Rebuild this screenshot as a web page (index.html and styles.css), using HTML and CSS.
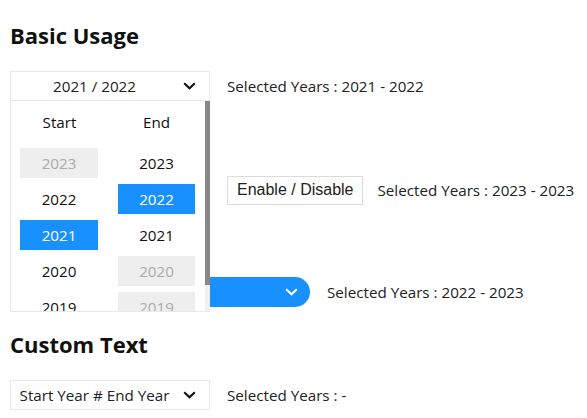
FILE: index.html
```html
<!DOCTYPE html>
<html>
<head>
<meta charset="utf-8">
<link rel="stylesheet" href="styles.css">
</head>
<body>
<h2 class="title title-first">Basic Usage</h2>

<div class="row row-1">
  <div class="picker">
    <div class="picker-head">
      <span class="picker-label">2021 / 2022</span>
      <svg class="chev" viewBox="0 0 13 8" width="13" height="8"><polyline points="1.2,1.2 6.5,6.3 11.8,1.2"/></svg>
    </div>
    <div class="picker-panel">
      <div class="cols">
        <div class="col">
          <div class="col-head">Start</div>
          <div class="cell disabled">2023</div>
          <div class="cell">2022</div>
          <div class="cell selected">2021</div>
          <div class="cell">2020</div>
          <div class="cell">2019</div>
        </div>
        <div class="col">
          <div class="col-head">End</div>
          <div class="cell">2023</div>
          <div class="cell selected">2022</div>
          <div class="cell">2021</div>
          <div class="cell disabled">2020</div>
          <div class="cell disabled">2019</div>
        </div>
      </div>
      <div class="scroll-track"><div class="scroll-thumb"></div></div>
    </div>
  </div>
  <span class="result">Selected Years : 2021 - 2022</span>
</div>

<div class="row row-2">
  <div class="picker">
    <div class="picker-head">
      <span class="picker-label">2023 / 2023</span>
      <svg class="chev" viewBox="0 0 13 8" width="13" height="8"><polyline points="1.2,1.2 6.5,6.3 11.8,1.2"/></svg>
    </div>
  </div>
  <button class="toggle">Enable / Disable</button>
  <span class="result">Selected Years : 2023 - 2023</span>
</div>

<div class="row row-3">
  <div class="picker picker-pill">
    <div class="picker-head">
      <span class="picker-label">2022 / 2023</span>
      <svg class="chev" viewBox="0 0 13 8" width="13" height="8"><polyline points="1.2,1.2 6.5,6.3 11.8,1.2"/></svg>
    </div>
  </div>
  <span class="result">Selected Years : 2022 - 2023</span>
</div>

<h2 class="title title-second">Custom Text</h2>

<div class="row row-4">
  <div class="picker">
    <div class="picker-head">
      <span class="picker-label">Start Year # End Year</span>
      <svg class="chev" viewBox="0 0 13 8" width="13" height="8"><polyline points="1.2,1.2 6.5,6.3 11.8,1.2"/></svg>
    </div>
  </div>
  <span class="result">Selected Years : -</span>
</div>
</body>
</html>
```

FILE: styles.css
```css
html, body {
  margin: 0;
  padding: 0;
  background: #fff;
}

body {
  padding: 0 10px;
  font-family: "Open Sans", "Noto Sans", sans-serif;
  font-size: 15.2px;
  color: #222;
  overflow: hidden;
}

.title {
  margin: 0;
  height: 30px;
  line-height: 30px;
  font-size: 22px;
  font-weight: 700;
  color: #111;
}

.title-first {
  margin-top: 20px;
  margin-bottom: 21px;
}

.title-second {
  margin-top: 22px;
  margin-bottom: 21px;
}

.row {
  display: flex;
  align-items: center;
  height: 30px;
}

.row-2 {
  margin-top: 74px;
}

.row-3 {
  margin-top: 72px;
}

.picker {
  position: relative;
  box-sizing: border-box;
  width: 200px;
  height: 30px;
  border: 1px solid #e8e8e8;
  background: #fff;
  flex: none;
  margin-right: 17px;
}

.picker-head {
  display: flex;
  align-items: center;
  height: 100%;
  padding-right: 13px;
}

.picker-label {
  flex: 1;
  text-align: center;
  white-space: nowrap;
}

.chev {
  flex: none;
  margin-left: 5px;
}

.chev polyline {
  fill: none;
  stroke: #111;
  stroke-width: 2.1;
}

.picker-pill {
  width: 300px;
  border: none;
  border-radius: 15px;
  background: #1890ff;
  color: #fff;
}

.picker-pill .picker-head {
  padding-right: 12px;
}

.picker-pill .chev polyline {
  stroke: #fff;
}

.picker-panel {
  position: absolute;
  top: 29px;
  left: -1px;
  width: 200px;
  height: 211px;
  box-sizing: border-box;
  border-left: 1px solid #e8e8e8;
  border-bottom: 1px solid #e8e8e8;
  background: #fff;
  display: flex;
  overflow: hidden;
  z-index: 10;
}

.cols {
  flex: 1;
  display: grid;
  grid-template-columns: 1fr 1fr;
  align-content: start;
}

.scroll-track {
  flex: none;
  width: 5px;
  background: #f1f1f1;
}

.scroll-thumb {
  height: 184px;
  background: #888;
}

.col-head {
  height: 47px;
  box-sizing: border-box;
  padding-top: 11px;
  line-height: 20px;
  text-align: center;
  color: #111;
}

.cell {
  height: 30px;
  line-height: 30px;
  margin: 0 10px 6px 9px;
  text-align: center;
  color: #111;
}

.col + .col .cell {
  margin-left: 10px;
}

.cell.selected {
  background: #1890ff;
  color: #fff;
}

.cell.disabled {
  background: #eeeeee;
  color: #aaaaaa;
}

.toggle {
  box-sizing: border-box;
  height: 29px;
  padding: 0 8px 0 9px;
  border: 1px solid #dcdcdc;
  background: #fff;
  font-family: "Liberation Sans", Arial, sans-serif;
  font-size: 16px;
  color: #222;
  margin-right: 15px;
}

.result {
  white-space: nowrap;
}
```
